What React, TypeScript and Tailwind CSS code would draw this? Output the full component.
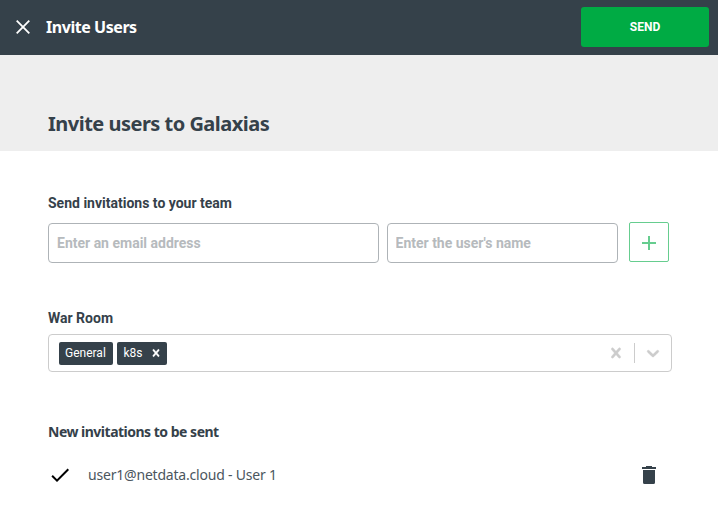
const CROSS =
  "M14.348 14.849c-0.469 0.469-1.229 0.469-1.697 0l-2.651-3.030-2.651 3.029c-0.469 0.469-1.229 0.469-1.697 0-0.469-0.469-0.469-1.229 0-1.697l2.758-3.15-2.759-3.152c-0.469-0.469-0.469-1.228 0-1.697s1.228-0.469 1.697 0l2.652 3.031 2.651-3.031c0.469-0.469 1.228-0.469 1.697 0s0.469 1.229 0 1.697l-2.758 3.152 2.758 3.15c0.469 0.469 0.469 1.229 0 1.698z";
const CHEVRON =
  "M4.516 7.548c0.436-0.446 1.043-0.481 1.576 0l3.908 3.747 3.908-3.747c0.533-0.481 1.141-0.446 1.574 0 0.436 0.445 0.408 1.197 0 1.615-0.406 0.418-4.695 4.502-4.695 4.502-0.217 0.223-0.502 0.335-0.787 0.335s-0.57-0.112-0.789-0.335c0 0-4.287-4.084-4.695-4.502s-0.436-1.17 0-1.615z";

function Glyph({ path, className }: { path: string; className: string }) {
  return (
    <svg viewBox="0 0 20 20" fill="currentColor" stroke="currentColor" strokeWidth="0.4" className={className}>
      <path d={path} />
    </svg>
  );
}

function Header() {
  return (
    <header className="flex h-[55px] items-center bg-[#35414a] pr-[9px] pb-px pl-4 text-white">
      <button aria-label="Close" className="mr-4 flex">
        <svg viewBox="0 0 14 14" className="size-[14px]" stroke="currentColor" strokeWidth="1.8">
          <path d="M0.7 0.7 13.3 13.3M13.3 0.7 0.7 13.3" />
        </svg>
      </button>
      <h1 className="font-['Noto_Sans',sans-serif] text-base leading-6 font-bold tracking-[-0.45px]">
        Invite Users
      </h1>
      <button className="ml-auto h-10 w-32 rounded-[3px] bg-[#00ab44] text-xs font-bold">SEND</button>
    </header>
  );
}

function InviteForm() {
  return (
    <section>
      <h3 className="text-sm leading-5 font-bold">Send invitations to your team</h3>
      <div className="mt-[9px] flex">
        <input
          placeholder="Enter an email address"
          className="mt-px h-10 w-[331px] rounded-[4px] border border-[#aeb3b7] px-2 text-sm font-bold placeholder:text-[#b6babd]"
        />
        <input
          placeholder="Enter the user's name"
          className="mt-px ml-2 h-10 w-[231px] rounded-[4px] border border-[#aeb3b7] px-[7.5px] text-sm font-bold placeholder:text-[#b6babd]"
        />
        <button
          aria-label="Add"
          className="ml-[11px] flex size-10 items-center justify-center rounded-[2px] border border-[#66cd8f] pt-[2px] text-[#66cd8f]"
        >
          <svg viewBox="0 0 14 14" className="size-[14px]" stroke="currentColor" strokeWidth="2">
            <path d="M7 0V14M0 7H14" />
          </svg>
        </button>
      </div>
    </section>
  );
}

function RoomSelect() {
  return (
    <section className="mt-[45px]">
      <h3 className="text-sm leading-5 font-bold">War Room</h3>
      <div className="mt-[6px] flex h-[38px] w-[624px] items-center rounded-[4px] border border-[#cccccc] pl-[10px] text-[#cccccc]">
        <span className="flex h-[23px] w-[54px] items-center rounded-[2px] bg-[#35414a] pl-[6px] text-xs text-white">
          General
        </span>
        <span className="ml-1 flex h-[23px] w-[50px] items-center rounded-[2px] bg-[#35414a] pl-[6.5px] text-xs text-white">
          k8s
          <Glyph path={CROSS} className="ml-auto mr-1 size-[14px]" />
        </span>
        <Glyph path={CROSS} className="ml-auto mr-2 size-5" />
        <span className="h-5 w-px bg-[#cccccc]" />
        <Glyph path={CHEVRON} className="mx-2 size-5" />
      </div>
    </section>
  );
}

function PendingInvites() {
  return (
    <section className="mt-[50px] font-['Noto_Sans',sans-serif]">
      <h3 className="text-sm leading-5 font-bold tracking-[-0.5px]">New invitations to be sent</h3>
      <div className="mt-[23px] flex h-5 items-center">
        <svg viewBox="0 0 24 24" className="size-6 text-black" fill="currentColor">
          <path d="M9 16.17 4.83 12l-1.42 1.41L9 19 21 7l-1.41-1.41z" />
        </svg>
        <span className="ml-4 text-sm leading-5 tracking-[-0.2px] text-[#4b565e]">
          user1@netdata.cloud - User 1
        </span>
        <button aria-label="Delete" className="ml-auto mr-4 flex">
          <svg viewBox="0 0 14 18" className="h-[18px] w-[14px]" fill="currentColor">
            <path d="M1 4H13V16.5a1.5 1.5 0 0 1-1.5 1.5H2.5a1.5 1.5 0 0 1-1.5-1.5ZM0 1H4V0H10V1H14V3H0Z" />
          </svg>
        </button>
      </div>
    </section>
  );
}

export default function App() {
  return (
    <div className="h-[526px] w-[718px] overflow-hidden bg-white font-[Roboto,sans-serif] text-[#35414a]">
      <Header />
      <div className="flex h-24 items-end bg-[#eeeeee] px-12 pb-3">
        <h2 className="font-['Noto_Sans',sans-serif] text-xl leading-[30px] font-bold tracking-[-0.51px]">
          Invite users to Galaxias
        </h2>
      </div>
      <main className="w-[720px] px-12 pt-[42px]">
        <InviteForm />
        <RoomSelect />
        <PendingInvites />
      </main>
    </div>
  );
}
